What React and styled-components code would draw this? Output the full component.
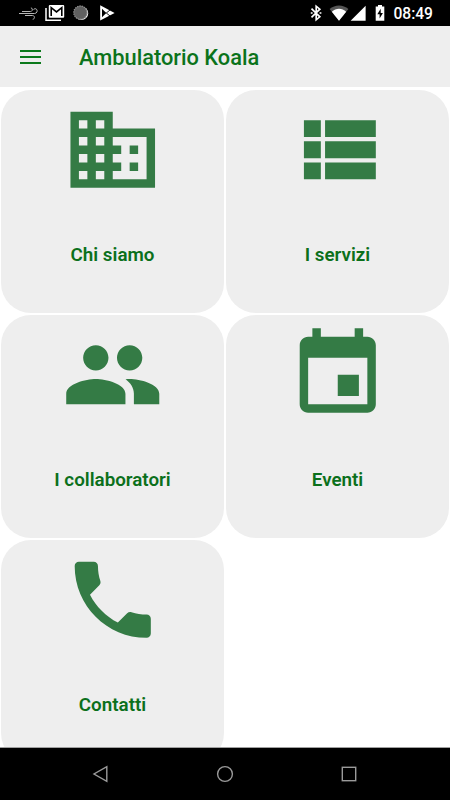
import React from "react";
import styled, { createGlobalStyle } from "styled-components";

const GlobalStyle = createGlobalStyle`
    body {
        margin: 0;
        background: #ffffff;
        font-family: Roboto, "Liberation Sans", sans-serif;
    }
`;

const Screen = styled.div`
    display: flex;
    flex-direction: column;
    width: 450px;
    height: 800px;
    overflow: hidden;
    background: #ffffff;
`;

const StatusBar = styled.div`
    display: flex;
    align-items: center;
    justify-content: space-between;
    flex: none;
    height: 26px;
    padding: 0 17px 0 18px;
    box-sizing: border-box;
    background: #000000;
    color: #ffffff;
`;

const StatusGroup = styled.div`
    display: flex;
    align-items: center;
    height: 26px;
`;

const StatusIcon = styled.svg`
    display: block;
    flex: none;
    width: ${(props) => props.$width}px;
    height: 26px;
    margin-right: ${(props) => props.$gap || 0}px;
`;

const Clock = styled.span`
    font-size: 15.6px;
    font-weight: 500;
    line-height: 26px;
    padding-top: 2px;
`;

const Header = styled.header`
    display: flex;
    align-items: center;
    flex: none;
    height: 61px;
    padding-left: 20px;
    box-sizing: border-box;
    background: #eeeeee;
`;

const MenuButton = styled.button`
    display: flex;
    flex-direction: column;
    gap: 4px;
    width: 21px;
    margin: 0 38px 0 0;
    padding: 0;
    border: none;
    background: none;
    cursor: pointer;
`;

const MenuLine = styled.span`
    height: 2px;
    background: #0c7a1c;
`;

const Title = styled.h1`
    margin: 3px 0 0;
    font-size: 21.8px;
    font-weight: 500;
    line-height: 28px;
    white-space: nowrap;
    color: #0b731b;
`;

const Content = styled.main`
    flex: 1;
    min-height: 0;
    padding-top: 1.5px;
    box-sizing: border-box;
    overflow: hidden;
`;

const Grid = styled.div`
    display: grid;
    grid-template-columns: 1fr 1fr;
    grid-auto-rows: 225px;
`;

const Card = styled.a`
    display: flex;
    flex-direction: column;
    align-items: center;
    margin: 1px;
    padding-top: 9.7px;
    box-sizing: border-box;
    border-radius: 30px;
    background: #eeeeee;
    cursor: pointer;
`;

const CardIcon = styled.svg`
    display: block;
    width: 101.5px;
    height: 101.5px;
    fill: #347b45;
`;

const CardLabel = styled.span`
    margin-top: 42.5px;
    font-size: 18.8px;
    font-weight: 600;
    line-height: 24px;
    color: #0b701b;
`;

const NavBar = styled.nav`
    display: flex;
    align-items: center;
    justify-content: space-between;
    flex: none;
    height: 53px;
    padding: 0 92px;
    box-sizing: border-box;
    border-top: 1px solid #a0a0a0;
    background: #000000;
`;

const NavIcon = styled.svg`
    display: block;
    width: 18px;
    height: 18px;
    fill: none;
    stroke: #9a9a9a;
    stroke-width: 1.4;
`;

const sections = [
    {
        label: "Chi siamo",
        path: "M12 7V3H2v18h20V7H12zM6 19H4v-2h2v2zm0-4H4v-2h2v2zm0-4H4V9h2v2zm0-4H4V5h2v2zm4 12H8v-2h2v2zm0-4H8v-2h2v2zm0-4H8V9h2v2zm0-4H8V5h2v2zm10 12h-8v-2h2v-2h-2v-2h2v-2h-2V9h8v10zm-2-8h-2v2h2v-2zm0 4h-2v2h2v-2z",
    },
    {
        label: "I servizi",
        path: "M4 14h4v-4H4v4zm0 5h4v-4H4v4zM4 9h4V5H4v4zm5 5h12v-4H9v4zm0 5h12v-4H9v4zM9 5v4h12V5H9z",
    },
    {
        label: "I collaboratori",
        path: "M16 11c1.66 0 2.99-1.34 2.99-3S17.66 5 16 5c-1.66 0-3 1.34-3 3s1.34 3 3 3zm-8 0c1.66 0 2.99-1.34 2.99-3S9.66 5 8 5C6.34 5 5 6.34 5 8s1.34 3 3 3zm0 2c-2.33 0-7 1.17-7 3.5V19h14v-2.5c0-2.33-4.67-3.5-7-3.5zm8 0c-.29 0-.62.02-.97.05 1.16.84 1.97 1.97 1.97 3.45V19h6v-2.5c0-2.33-4.67-3.5-7-3.5z",
    },
    {
        label: "Eventi",
        path: "M17 12h-5v5h5v-5zM16 1v2H8V1H6v2H5c-1.11 0-1.99.9-1.99 2L3 19c0 1.1.89 2 2 2h14c1.1 0 2-.9 2-2V5c0-1.1-.9-2-2-2h-1V1h-2zm3 18H5V8h14v11z",
    },
    {
        label: "Contatti",
        path: "M6.62 10.79c1.44 2.83 3.76 5.14 6.59 6.59l2.2-2.2c.27-.27.67-.36 1.02-.24 1.12.37 2.33.57 3.57.57.55 0 1 .45 1 1V20c0 .55-.45 1-1 1-9.39 0-17-7.61-17-17 0-.55.45-1 1-1h3.5c.55 0 1 .45 1 1 0 1.25.2 2.45.57 3.57.11.35.03.74-.25 1.02l-2.2 2.2z",
    },
];

function Notifications() {
    return (
        <StatusGroup>
            {/* wind */}
            <StatusIcon $width={21} $gap={6} viewBox="0 0 21 26" fill="none" stroke="#b5b5b5" strokeWidth="1">
                <path d="M4 11.5h8.5c2.4 0 2.4-3.6.4-3.6M1 13.5h15.5c3.4 0 3.4-4.8.6-4.8-1 0-1.4.6-1.4 1.2M7 15.5h7.5c2.6 0 2.4 3.8.2 3.8" />
            </StatusIcon>
            {/* mail */}
            <StatusIcon $width={20} $gap={8} viewBox="0 0 20 26">
                <path d="M1 8v12.2h15" fill="none" stroke="#ffffff" strokeWidth="1.5" />
                <rect x="3.8" y="5" width="15.4" height="12.8" rx="1" fill="#ffffff" />
                <path d="M6.2 16V7.6l5.3 4.3 5.3-4.3V16" fill="none" stroke="#000000" strokeWidth="1.6" />
            </StatusIcon>
            {/* sync */}
            <StatusIcon $width={16} $gap={10} viewBox="0 0 16 26">
                <circle cx="8.4" cy="13.3" r="6.8" fill="#f0f0f0" />
                <circle cx="7.4" cy="12.6" r="6.8" fill="#606060" />
                <circle cx="7.4" cy="12.6" r="6.6" fill="none" stroke="#909090" strokeWidth="1.3" strokeDasharray="1.2 1.1" />
            </StatusIcon>
            {/* play store */}
            <StatusIcon $width={16} viewBox="0 0 16 26">
                <path d="M1.2 5.2v15.4L15.6 13z" fill="#ffffff" />
                <path d="M3 8.8v8.5l4.3-4.3z" fill="#000000" />
                <path d="M7.3 13l4.2-3.4M7.3 13l4.2 3.4" fill="none" stroke="#000000" strokeWidth="0.9" />
            </StatusIcon>
        </StatusGroup>
    );
}

function SystemStatus() {
    return (
        <StatusGroup>
            {/* bluetooth */}
            <StatusIcon $width={12} $gap={7} viewBox="0 0 12 26" fill="none" stroke="#ffffff" strokeWidth="1.7">
                <path d="M1.5 8.7l8.3 8.1-3.6 3V6.2l3.6 3-8.3 8.1" />
                <path d="M.8 13h1.8M9.6 13h1.8" />
            </StatusIcon>
            {/* wifi */}
            <StatusIcon $width={20} $gap={1} viewBox="0 0 20 26">
                <path d="M.6 9.1C6 4.3 14 4.3 19.4 9.1L10 20.8z" fill="#555555" />
                <path d="M2.8 11.8C7 7.7 13 7.7 17.2 11.8L10 20.8z" fill="#ffffff" />
            </StatusIcon>
            {/* signal */}
            <StatusIcon $width={16} $gap={9} viewBox="0 0 16 26">
                <path d="M.6 20.7L15.6 5.8v14.9z" fill="#ffffff" />
            </StatusIcon>
            {/* battery */}
            <StatusIcon $width={10} $gap={8} viewBox="0 0 10 26">
                <path d="M3 5h4v1.5h2.3v14.3H.7V6.5H3z" fill="#ffffff" />
                <path d="M5.7 8.8L2.3 14.2h2.3v4.3l3.3-5.6H5.7z" fill="#000000" />
            </StatusIcon>
            <Clock>08:49</Clock>
        </StatusGroup>
    );
}

function App() {
    return (
        <>
            <GlobalStyle />
            <Screen>
                <StatusBar>
                    <Notifications />
                    <SystemStatus />
                </StatusBar>
                <Header>
                    <MenuButton aria-label="Menu">
                        <MenuLine />
                        <MenuLine />
                        <MenuLine />
                    </MenuButton>
                    <Title>Ambulatorio Koala</Title>
                </Header>
                <Content>
                    <Grid>
                        {sections.map((section) => (
                            <Card key={section.label}>
                                <CardIcon viewBox="0 0 24 24">
                                    <path d={section.path} />
                                </CardIcon>
                                <CardLabel>{section.label}</CardLabel>
                            </Card>
                        ))}
                    </Grid>
                </Content>
                <NavBar>
                    <NavIcon viewBox="0 0 18 18">
                        <path d="M14.8 1.7v14.6L2 9z" />
                    </NavIcon>
                    <NavIcon viewBox="0 0 18 18">
                        <circle cx="9" cy="9" r="7.4" />
                    </NavIcon>
                    <NavIcon viewBox="0 0 18 18">
                        <rect x="2.3" y="2.3" width="13.4" height="13.4" />
                    </NavIcon>
                </NavBar>
            </Screen>
        </>
    );
}

export default App;
